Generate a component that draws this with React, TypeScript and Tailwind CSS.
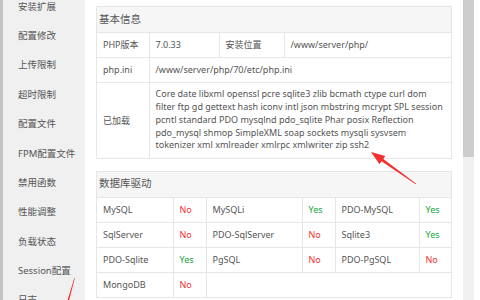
const menu = [
  '安装扩展',
  '配置修改',
  '上传限制',
  '超时限制',
  '配置文件',
  'FPM配置文件',
  '禁用函数',
  '性能调整',
  '负载状态',
  'Session配置',
  '日志',
];

type Driver = { name: string; ok: boolean };

const drivers: Driver[][] = [
  [
    { name: 'MySQL', ok: false },
    { name: 'MySQLi', ok: true },
    { name: 'PDO-MySQL', ok: true },
  ],
  [
    { name: 'SqlServer', ok: false },
    { name: 'PDO-SqlServer', ok: false },
    { name: 'Sqlite3', ok: true },
  ],
  [
    { name: 'PDO-Sqlite', ok: true },
    { name: 'PgSQL', ok: false },
    { name: 'PDO-PgSQL', ok: false },
  ],
];

const loaded =
  'Core date libxml openssl pcre sqlite3 zlib bcmath ctype curl dom filter ftp gd gettext hash iconv intl json mbstring mcrypt SPL session pcntl standard PDO mysqlnd pdo_sqlite Phar posix Reflection pdo_mysql shmop SimpleXML soap sockets mysqli sysvsem tokenizer xml xmlreader xmlrpc xmlwriter zip ssh2';

function Status({ ok }: { ok: boolean }) {
  return ok ? (
    <span className="text-[#20a53a]">Yes</span>
  ) : (
    <span className="text-[#f53030]">No</span>
  );
}

const cell = 'border border-[#e6e6e6] pl-[6px] align-middle';

export default function App() {
  return (
    <div className="relative flex h-[300px] w-[480px] overflow-hidden bg-white font-['Noto_Sans','Noto_Sans_CJK_SC',sans-serif] text-[9px] text-[#555]">
      <div className="w-[3px] shrink-0 bg-[#c4c4c4]" />

      <aside className="w-[82px] shrink-0 bg-[#f0f0f0]">
        <div className="-mt-[8px]">
          {menu.map((m) => (
            <div key={m} className="flex h-[29.4px] items-center pl-[15px] text-[9.5px] text-[#555]">
              {m}
            </div>
          ))}
        </div>
      </aside>

      <main className="w-[378px] shrink-0 pl-[11px] pr-[11px] pt-[6px]">
        {/* 基本信息 */}
        <div className="border border-[#e6e6e6]">
          <div className="flex h-[25px] items-center bg-[#f6f6f6] pl-[2px] text-[10.5px] text-[#555]">基本信息</div>
          <table className="w-full table-fixed border-collapse">
            <colgroup>
              <col className="w-[52px]" />
              <col className="w-[70px]" />
              <col className="w-[65px]" />
              <col />
            </colgroup>
            <tbody>
              <tr className="h-[25px]">
                <td className={`${cell} border-l-0`}>PHP版本</td>
                <td className={cell}>7.0.33</td>
                <td className={cell}>安装位置</td>
                <td className={`${cell} border-r-0`}>/www/server/php/</td>
              </tr>
              <tr className="h-[25px]">
                <td className={`${cell} border-l-0`}>php.ini</td>
                <td className={`${cell} border-r-0`} colSpan={3}>
                  /www/server/php/70/etc/php.ini
                </td>
              </tr>
              <tr className="h-[75px]">
                <td className={`${cell} border-b-0 border-l-0`}>已加载</td>
                <td className={`${cell} border-b-0 border-r-0 pr-[6px] leading-[12.7px]`} colSpan={3}>
                  {loaded}
                </td>
              </tr>
            </tbody>
          </table>
        </div>

        {/* 数据库驱动 */}
        <div className="mt-[12px] border border-[#e6e6e6]">
          <div className="flex h-[25px] items-center bg-[#f6f6f6] pl-[2px] text-[10.5px] text-[#555]">数据库驱动</div>
          <table className="w-full table-fixed border-collapse">
            <colgroup>
              <col className="w-[76px]" />
              <col className="w-[33px]" />
              <col className="w-[96px]" />
              <col className="w-[33px]" />
              <col className="w-[84px]" />
              <col />
            </colgroup>
            <tbody>
              {drivers.map((row, i) => (
                <tr key={i} className="h-[25px]">
                  {row.map((d, j) => (
                    <>
                      <td key={d.name} className={`${cell} ${j === 0 ? 'border-l-0' : ''}`}>
                        {d.name}
                      </td>
                      <td key={d.name + '-s'} className={`${cell} ${j === 2 ? 'border-r-0' : ''}`}>
                        <Status ok={d.ok} />
                      </td>
                    </>
                  ))}
                </tr>
              ))}
              <tr className="h-[25px]">
                <td className={`${cell} border-b-0 border-l-0`}>MongoDB</td>
                <td className={`${cell} border-b-0`}>
                  <Status ok={false} />
                </td>
                <td className={`${cell} border-b-0 border-r-0`} colSpan={4} />
              </tr>
            </tbody>
          </table>
        </div>
      </main>

      <div className="w-[11px] shrink-0 bg-[#f0f0f0]">
        <div className="h-[157px] bg-[#cdcdcd]" />
      </div>

      <svg className="pointer-events-none absolute inset-0" width="480" height="300" viewBox="0 0 480 300">
        <polygon points="371,152 385.3,156 383.3,158.9 416.3,183.7 415.7,184.3 381.5,161.3 379.5,164.2" fill="#f2312f" />
        <polygon points="74.3,278 74.8,278.2 69.2,300 67.6,300" fill="#f2312f" />
      </svg>
    </div>
  );
}
